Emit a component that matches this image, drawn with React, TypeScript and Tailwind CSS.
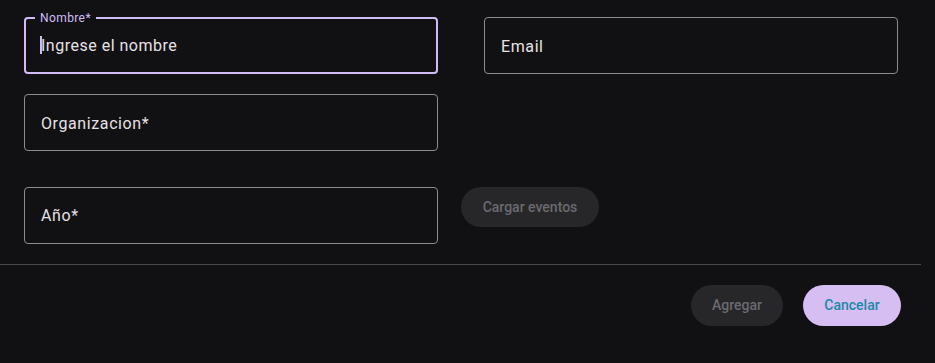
import React from "react";

const font = { fontFamily: "Roboto, 'Noto Sans', sans-serif" };

function Field({ label, shift = "pt-[3px]" }: { label: string; shift?: string }) {
  return (
    <div className={`h-[57px] w-[414px] rounded-[4px] border border-[#8e8a93] flex items-center pl-[16px] ${shift}`}>
      <span className="text-[16px] text-[#e6e1e5] tracking-[0.6px]">{label}</span>
    </div>
  );
}

export default function App() {
  return (
    <div className="w-[935px] h-[363px] bg-[#111114] overflow-hidden" style={font}>
      <div className="pl-[24px] pt-[17px]">
        <div className="flex gap-[46px]">
          <div className="relative h-[57px] w-[414px] rounded-[4px] border-2 border-[#d0bcf5] flex items-center pl-[15px]">
            <span className="absolute left-[9px] -top-[9px] px-[5px] bg-[#111114] text-[12px] leading-[16px] text-[#d0bcf5] tracking-[0.4px]">
              Nombre*
            </span>
            <span className="relative text-[16px] text-[#e6e1e5] tracking-[0.5px]">
              <span className="absolute -left-[1px] top-[2px] w-[2px] h-[18px] bg-[#d0bcf5]" />
              Ingrese el nombre
            </span>
          </div>
          <Field label="Email" />
        </div>
        <div className="mt-[20px]">
          <Field label="Organizacion*" shift="pt-[2px]" />
        </div>
        <div className="mt-[36px] flex items-start gap-[23px]">
          <Field label="Año*" shift="pt-0" />
          <button className="h-[40px] w-[138px] rounded-full bg-[#27272a] text-[14px] font-medium text-[#6b6a70]">
            Cargar eventos
          </button>
        </div>
      </div>
      <div className="mt-[20px] w-[921px] h-px bg-[#49474d]" />
      <div className="w-[921px] flex justify-end gap-[20px] pr-[20px] mt-[20px]">
        <button className="h-[41px] w-[92px] rounded-full bg-[#27272a] text-[14px] font-medium text-[#6b6a70]">
          Agregar
        </button>
        <button className="h-[41px] w-[98px] rounded-full bg-[#d6bdf2] text-[14px] font-medium text-[#1a8aa8]">
          Cancelar
        </button>
      </div>
    </div>
  );
}
